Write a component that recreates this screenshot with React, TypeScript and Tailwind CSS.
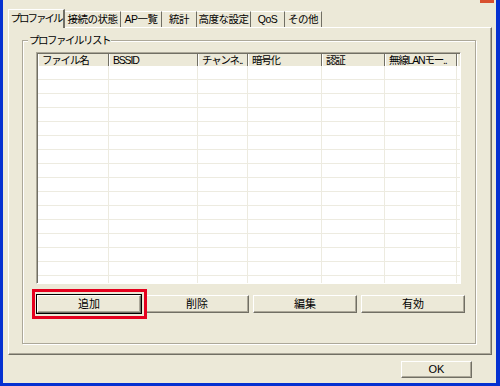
const tabs = [
  { label: 'プロファイル', w: 57, active: true },
  { label: '接続の状態', w: 56 },
  { label: 'AP一覧', w: 41 },
  { label: '統計', w: 35 },
  { label: '高度な設定', w: 54 },
  { label: 'QoS', w: 34 },
  { label: 'その他', w: 37 },
]

const columns = [
  { label: 'ファイル名', w: 71 },
  { label: 'BSSID', w: 89 },
  { label: 'チャンネ..', w: 50 },
  { label: '暗号化', w: 74 },
  { label: '認証', w: 63 },
  { label: '無線LANモー..', w: 72 },
]

const rows = Array.from({ length: 16 })

function Button({ label, className = '' }: { label: string; className?: string }) {
  return (
    <div
      className={`flex items-center justify-center bg-[#ECE9D8] border border-t-white border-l-white border-r-[#716F64] border-b-[#716F64] shadow-[inset_-1px_-1px_0_#ACA899] text-[11px] leading-none ${className}`}
    >
      {label}
    </div>
  )
}

export default function App() {
  return (
    <div className="relative w-[500px] h-[386px] bg-[#ECE9D8] border-l-[3px] border-r-4 border-b-[3px] border-[#0531D1] flex flex-col font-['Liberation_Sans','Noto_Sans_CJK_JP',sans-serif] text-black overflow-hidden">
      {/* title bar remnant */}
      <div className="absolute right-[2px] top-0 w-[14px] h-[3px] bg-[#D8502F]" />

      {/* tab strip */}
      <div className="ml-[5px] mt-[9px] h-[18px] flex items-end relative z-10">
        {tabs.map((t) =>
          t.active ? (
            <div
              key={t.label}
              style={{ width: t.w }}
              className="h-[19px] -mb-[1px] bg-[#ECE9D8] border-t border-l border-white border-r-2 border-r-[#716F64] flex items-center justify-center text-[10.5px] tracking-[-2px] whitespace-nowrap pb-[1px]"
            >
              {t.label}
            </div>
          ) : (
            <div
              key={t.label}
              style={{ width: t.w }}
              className="h-[16px] border-t border-white border-r border-r-[#716F64] flex items-center justify-center text-[10.5px] tracking-[-0.5px] whitespace-nowrap"
            >
              {t.label}
            </div>
          ),
        )}
      </div>

      {/* tab panel */}
      <div className="ml-[5px] mr-[4px] h-[328px] border-t border-l border-white border-r border-b border-r-[#716F64] border-b-[#716F64] shadow-[inset_-1px_-1px_0_#ACA899] pl-[13px] pt-[12px]">
        {/* group box */}
        <div className="relative w-[454px] h-[304px] border border-[#ACA899] shadow-[inset_1px_1px_0_#fff,1px_1px_0_#fff] pl-[13px] pt-[11px]">
          <div className="absolute left-[5px] -top-[7px] px-[1px] bg-[#ECE9D8] text-[10.5px] leading-[12px] tracking-[-1.5px] whitespace-nowrap">
            プロファイルリスト
          </div>

          {/* list view */}
          <div className="w-[425px] h-[232px] bg-white border border-t-[#ACA899] border-l-[#ACA899] border-r-white border-b-white shadow-[inset_1px_1px_0_#716F64] pl-[1px] pt-[1px] overflow-hidden">
            <div className="flex h-[12px]">
              {columns.map((c) => (
                <div
                  key={c.label}
                  style={{ width: c.w }}
                  className="shrink-0 h-full bg-[#ECE9D8] border-l border-white border-r border-r-[#716F64] pl-[3px] text-[10.5px] leading-[12px] tracking-[-1.2px] whitespace-nowrap"
                >
                  {c.label}
                </div>
              ))}
              <div className="flex-1 h-full bg-[#ECE9D8] border-l border-white" />
            </div>
            {rows.map((_, i) => (
              <div key={i} className="flex h-[14px] border-b border-[#EDEBE0]">
                {columns.map((c) => (
                  <div key={c.label} style={{ width: c.w }} className="shrink-0 h-full border-r border-[#EDEBE0]" />
                ))}
                <div className="flex-1 h-full" />
              </div>
            ))}
          </div>

          {/* buttons */}
          <div className="relative mt-[11px] ml-[1px] w-[428px] h-[18px] flex gap-[4px]">
            <Button label="追加" className="w-[104px] h-full outline outline-1 outline-black" />
            <Button label="削除" className="w-[104px] h-full" />
            <Button label="編集" className="w-[104px] h-full" />
            <Button label="有効" className="w-[104px] h-full" />
            <div className="absolute -left-[5px] -top-[6px] w-[115px] h-[30px] border-[3px] border-[#E5001E]" />
          </div>
        </div>
      </div>

      {/* bottom bar */}
      <div className="flex justify-end pr-[24px] mt-[6px]">
        <Button label="OK" className="w-[71px] h-[17px]" />
      </div>
    </div>
  )
}
